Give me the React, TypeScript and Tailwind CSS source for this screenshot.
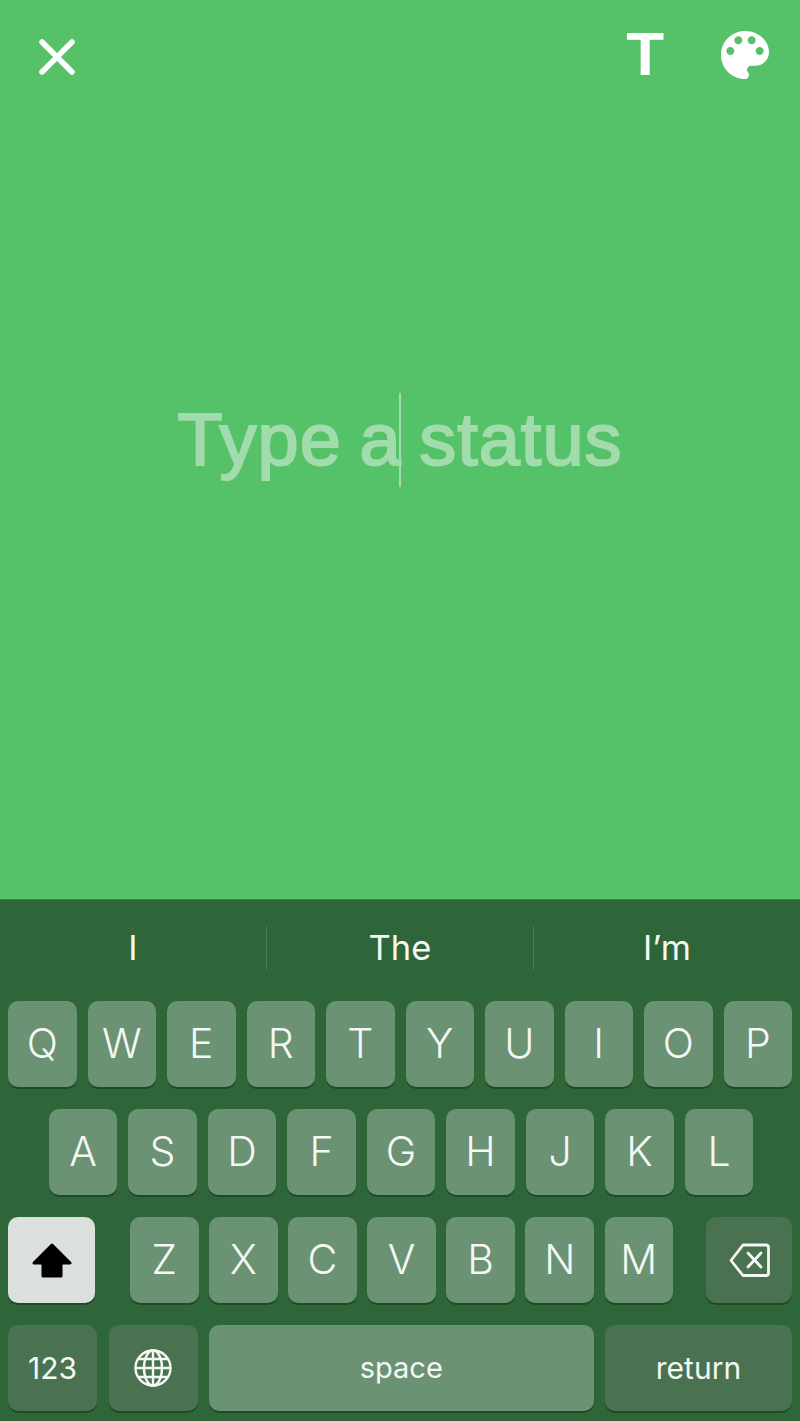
const rowOne = ["Q", "W", "E", "R", "T", "Y", "U", "I", "O", "P"];
const rowTwo = ["A", "S", "D", "F", "G", "H", "J", "K", "L"];
const rowThree = ["Z", "X", "C", "V", "B", "N", "M"];

const fontStack = "font-['Inter','Liberation_Sans',sans-serif]";

function LetterKey({ label }: { label: string }) {
  return (
    <div className="flex h-[86px] w-[68.5px] items-center justify-center rounded-[10px] bg-[#6b9273] pb-[2px] text-[41px] font-light leading-none text-[#f4f8f4] shadow-[0_2px_0_#1f4a28]">
      {label}
    </div>
  );
}

function CloseIcon() {
  return (
    <svg width="36" height="36" viewBox="0 0 36 36" fill="none" stroke="white" strokeWidth="5.5" strokeLinecap="round">
      <path d="M3 3 L33 33 M33 3 L3 33" />
    </svg>
  );
}

function PaletteIcon() {
  return (
    <svg width="48" height="48" viewBox="3 3 18 18" fill="white">
      <path d="M12 3c-4.97 0-9 4.03-9 9s4.03 9 9 9c.83 0 1.5-.67 1.5-1.5 0-.39-.15-.74-.39-1.01-.23-.26-.38-.61-.38-.99 0-.83.67-1.5 1.5-1.5H16c2.76 0 5-2.24 5-5 0-4.42-4.03-8-9-8zm-5.5 9c-.83 0-1.5-.67-1.5-1.5S5.67 9 6.5 9 8 9.67 8 10.5 7.33 12 6.5 12zm3-4C8.67 8 8 7.33 8 6.5S8.67 5 9.5 5s1.5.67 1.5 1.5S10.33 8 9.5 8zm5 0c-.83 0-1.5-.67-1.5-1.5S13.67 5 14.5 5s1.5.67 1.5 1.5S15.33 8 14.5 8zm3 4c-.83 0-1.5-.67-1.5-1.5S16.67 9 17.5 9s1.5.67 1.5 1.5-.67 1.5-1.5 1.5z" />
    </svg>
  );
}

function ShiftIcon() {
  return (
    <svg width="40" height="35" viewBox="0 0 40 35" fill="black" stroke="black" strokeWidth="3" strokeLinejoin="round">
      <path d="M20 2 L38 20 H29 V33 H11 V20 H2 Z" />
    </svg>
  );
}

function DeleteIcon() {
  return (
    <svg width="41" height="35" viewBox="0 0 41 35" fill="none" stroke="#f4f8f4" strokeWidth="2.8" strokeLinejoin="round" strokeLinecap="round">
      <path d="M14 2 H37 a2.5 2.5 0 0 1 2.5 2.5 V30 a2.5 2.5 0 0 1 -2.5 2.5 H14 L2 17.5 Z" />
      <path d="M19 10 L32 24 M32 10 L19 24" />
    </svg>
  );
}

function GlobeIcon() {
  return (
    <svg width="38" height="38" viewBox="0 0 38 38" fill="none" stroke="#f4f8f4" strokeWidth="2.4">
      <circle cx="19" cy="19" r="17.5" />
      <ellipse cx="19" cy="19" rx="9" ry="17.5" />
      <path d="M19 1.5 V36.5 M1.5 19 H36.5 M4.5 10 H33.5 M4.5 28 H33.5" />
    </svg>
  );
}

export default function App() {
  return (
    <div className={`flex h-screen flex-col overflow-hidden bg-[#55c169] ${fontStack}`}>
      <main className="flex flex-1 flex-col">
        <header className="flex h-[110px] items-start justify-between pl-[39px] pr-[31px]">
          <div className="pt-[39px]">
            <CloseIcon />
          </div>
          <div className="flex items-start gap-[57px] pt-[31px]">
            <span className="-mt-[3px] font-['Liberation_Sans',sans-serif] text-[62px] font-bold leading-[52px] text-white">T</span>
            <PaletteIcon />
          </div>
        </header>
        <div className="flex flex-1 items-center justify-center pb-[130px]">
          <div className="relative">
            <span className="font-['Liberation_Sans',sans-serif] text-[74px] font-normal leading-none tracking-[1px] text-[#a3dcac] [word-spacing:-4px] [-webkit-text-stroke:2px_#a3dcac]">Type a status</span>
            <div className="absolute left-1/2 top-1/2 h-[94px] w-[2px] -translate-x-1/2 -translate-y-1/2 bg-[#a3dcac]" />
          </div>
        </div>
      </main>

      <section className="flex h-[521px] flex-col bg-[#2f6639] px-[8px] shadow-[0_-1px_0_#3a8047]">
        <div className="-mx-[8px] flex h-[101px] items-center pb-[5px] text-[34.5px] font-normal leading-none text-[#f4f8f4]">
          <div className="flex flex-1 justify-center">I</div>
          <div className="h-[44px] w-px bg-[#4a7c54]" />
          <div className="flex flex-1 justify-center">The</div>
          <div className="h-[44px] w-px bg-[#4a7c54]" />
          <div className="flex flex-1 justify-center">I’m</div>
        </div>
        <div className="flex flex-col gap-[22px]">
          <div className="flex justify-between">
            {rowOne.map((k) => (
              <LetterKey key={k} label={k} />
            ))}
          </div>
          <div className="flex justify-center gap-[11px] pl-[2px]">
            {rowTwo.map((k) => (
              <LetterKey key={k} label={k} />
            ))}
          </div>
          <div className="flex items-center">
            <div className="flex h-[86px] w-[87px] items-center justify-center rounded-[10px] bg-[#dbe0dc] shadow-[0_2px_0_#1f4a28]">
              <ShiftIcon />
            </div>
            <div className="ml-[35px] flex gap-[10.6px]">
              {rowThree.map((k) => (
                <LetterKey key={k} label={k} />
              ))}
            </div>
            <div className="ml-auto flex h-[86px] w-[86px] items-center justify-center rounded-[10px] bg-[#4a7150] shadow-[0_2px_0_#1f4a28]">
              <DeleteIcon />
            </div>
          </div>
          <div className="flex gap-[11.5px] text-[#f4f8f4]">
            <div className="flex h-[86px] w-[89px] items-center justify-center rounded-[10px] bg-[#4a7150] text-[30px] font-normal shadow-[0_2px_0_#1f4a28]">
              123
            </div>
            <div className="flex h-[86px] w-[89px] items-center justify-center rounded-[10px] bg-[#4a7150] shadow-[0_2px_0_#1f4a28]">
              <GlobeIcon />
            </div>
            <div className="flex h-[86px] flex-1 items-center justify-center rounded-[10px] bg-[#6b9273] text-[29px] font-normal shadow-[0_2px_0_#1f4a28]">
              space
            </div>
            <div className="flex h-[86px] w-[187px] items-center justify-center rounded-[10px] bg-[#4a7150] text-[30px] font-normal shadow-[0_2px_0_#1f4a28]">
              return
            </div>
          </div>
        </div>
      </section>
    </div>
  );
}
